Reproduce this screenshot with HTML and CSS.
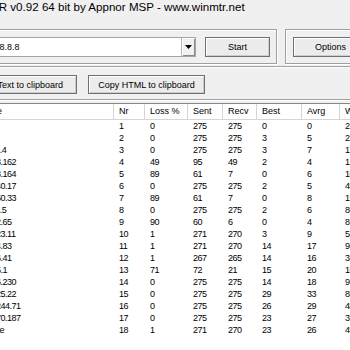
FILE: index.html
```html
<!DOCTYPE html>
<html lang="en">
  <head>
    <meta charset="UTF-8" />
    <meta name="viewport" content="width=device-width, initial-scale=1.0" />
    <title>WinMTR</title>
    <link rel="stylesheet" href="styles.css">
  </head>
  <body>
    <div class="window">
      <div class="titlebar">WinMTR v0.92 64 bit by Appnor MSP - www.winmtr.net</div>

      <!-- Host and options -->
      <div class="toolbar">
        <div class="group group-host">
          <span class="host-label">Host:</span>
          <div class="combo">
            <span>8.8.8.8</span>
            <span class="combo-btn">
              <svg width="7" height="4" viewBox="0 0 7 4"><polygon points="0,0 7,0 3.5,4" fill="#000" /></svg>
            </span>
          </div>
          <button class="btn btn-start" type="button">Start</button>
        </div>
        <div class="group group-opts">
          <button class="btn btn-options" type="button">Options</button>
        </div>
      </div>

      <!-- Export -->
      <div class="group group-copy">
        <button class="btn btn-copy" type="button">Copy Text to clipboard</button>
        <button class="btn btn-copy" type="button">Copy HTML to clipboard</button>
      </div>

      <!-- Results -->
      <div class="list">
        <div class="head">
          <div>Hostname</div><div>Nr</div><div>Loss %</div><div>Sent</div><div>Recv</div><div>Best</div><div>Avrg</div><div>Worst</div><div>Last</div>
        </div>
        <div class="row"><div>10.0.0.1</div><div>1</div><div>0</div><div>275</div><div>275</div><div>0</div><div>0</div><div>2</div><div>0</div></div>
        <div class="row"><div>10.6.0.1</div><div>2</div><div>0</div><div>275</div><div>275</div><div>3</div><div>5</div><div>22</div><div>4</div></div>
        <div class="row"><div>84.116.13.4</div><div>3</div><div>0</div><div>275</div><div>275</div><div>3</div><div>7</div><div>17</div><div>6</div></div>
        <div class="row"><div>72.14.233.162</div><div>4</div><div>49</div><div>95</div><div>49</div><div>2</div><div>4</div><div>12</div><div>3</div></div>
        <div class="row"><div>72.14.233.164</div><div>5</div><div>89</div><div>61</div><div>7</div><div>0</div><div>6</div><div>10</div><div>5</div></div>
        <div class="row"><div>209.85.240.17</div><div>6</div><div>0</div><div>275</div><div>275</div><div>2</div><div>5</div><div>45</div><div>4</div></div>
        <div class="row"><div>209.85.250.33</div><div>7</div><div>89</div><div>61</div><div>7</div><div>0</div><div>8</div><div>19</div><div>7</div></div>
        <div class="row"><div>62.115.13.5</div><div>8</div><div>0</div><div>275</div><div>275</div><div>2</div><div>6</div><div>80</div><div>5</div></div>
        <div class="row"><div>108.170.2.65</div><div>9</div><div>90</div><div>60</div><div>6</div><div>0</div><div>4</div><div>8</div><div>3</div></div>
        <div class="row"><div>142.250.23.11</div><div>10</div><div>1</div><div>271</div><div>270</div><div>3</div><div>9</div><div>54</div><div>8</div></div>
        <div class="row"><div>216.239.4.83</div><div>11</div><div>1</div><div>271</div><div>270</div><div>14</div><div>17</div><div>96</div><div>16</div></div>
        <div class="row"><div>216.239.6.41</div><div>12</div><div>1</div><div>267</div><div>265</div><div>14</div><div>16</div><div>33</div><div>15</div></div>
        <div class="row"><div>108.170.5.1</div><div>13</div><div>71</div><div>72</div><div>21</div><div>15</div><div>20</div><div>104</div><div>18</div></div>
        <div class="row"><div>172.253.6.230</div><div>14</div><div>0</div><div>275</div><div>275</div><div>14</div><div>18</div><div>96</div><div>17</div></div>
        <div class="row"><div>108.170.25.22</div><div>15</div><div>0</div><div>275</div><div>275</div><div>29</div><div>33</div><div>85</div><div>31</div></div>
        <div class="row"><div>142.251.244.71</div><div>16</div><div>0</div><div>275</div><div>275</div><div>26</div><div>29</div><div>48</div><div>28</div></div>
        <div class="row"><div>172.253.70.187</div><div>17</div><div>0</div><div>275</div><div>275</div><div>23</div><div>27</div><div>37</div><div>26</div></div>
        <div class="row"><div>dns.google</div><div>18</div><div>1</div><div>271</div><div>270</div><div>23</div><div>26</div><div>45</div><div>25</div></div>
      </div>
    </div>
  </body>
</html>
```

FILE: styles.css
```css
* {
  box-sizing: border-box;
}
body {
  margin: 0;
  overflow: hidden;
  background-color: #f0f0f0;
  font-family: "Liberation Sans", Arial, sans-serif;
  font-size: 9px;
  color: #000;
}

/* The window sits partly off the left edge of the screen */
.window {
  margin-left: -60px;
  width: 480px;
}
.titlebar {
  height: 20px;
  padding-left: 22px;
  font-size: 11.6px;
  line-height: 14px;
  white-space: nowrap;
}

/* Group boxes */
.toolbar {
  display: flex;
  gap: 8px;
  margin: 9px 0 0 8px;
}
.group {
  display: flex;
  align-items: flex-start;
  border: 1px solid #a0a0a0;
  box-shadow: inset 1px 1px 0 #fff, 1px 1px 0 #fff;
}
.group-host {
  width: 329px;
  height: 35px;
  padding: 7px 6px 0 8px;
}
.host-label {
  width: 32px;
  line-height: 20px;
}
.combo {
  display: flex;
  align-items: center;
  justify-content: space-between;
  width: 207px;
  height: 20px;
  padding-left: 2px;
  background-color: #fff;
  border: 1px solid #a5a5a5;
}
.combo-btn {
  display: flex;
  align-items: center;
  justify-content: center;
  width: 14px;
  height: 18px;
  background-color: #f0f0f0;
  border-left: 1px solid #b5b5b5;
  box-shadow: inset 1px 1px 0 #fff, inset -1px -1px 0 #8a8a8a;
}
.group-opts {
  width: 100px;
  height: 35px;
  padding: 7px 0 0 7px;
}
.group-copy {
  gap: 11px;
  width: 464px;
  height: 34px;
  margin: 2px 0 0 8px;
  padding: 8px 0 0 11px;
}

/* Buttons */
.btn {
  height: 20px;
  padding: 0;
  font-family: inherit;
  font-size: 9px;
  color: #000;
  background-color: #ececec;
  border: 1px solid #707070;
  box-shadow: inset 1px 1px 0 #fff, inset -1px -1px 0 #cdcdcd;
  white-space: nowrap;
}
.btn-start {
  width: 65px;
  margin-left: 9px;
}
.btn-options {
  width: 75px;
}
.btn-copy {
  width: 117px;
  height: 19px;
}

/* Result list */
.list {
  height: 260px;
  margin: 3px 0 0 15px;
  background-color: #fff;
  border-top: 1px solid #828790;
  border-left: 1px solid #828790;
}
.head,
.row {
  display: grid;
  grid-template-columns: 158px 31px 43px 35px 34px 45px 38px 45px 45px;
}
.head div {
  height: 16px;
  line-height: 15px;
  padding-left: 5px;
  border-right: 1px solid #d5d5d5;
  border-bottom: 1px solid #d5d5d5;
  white-space: nowrap;
}
.row div {
  height: 12px;
  line-height: 12px;
  padding-left: 5px;
  letter-spacing: -0.5px;
  white-space: nowrap;
  overflow: hidden;
}
.row div:first-child {
  padding-left: 9px;
}
```
